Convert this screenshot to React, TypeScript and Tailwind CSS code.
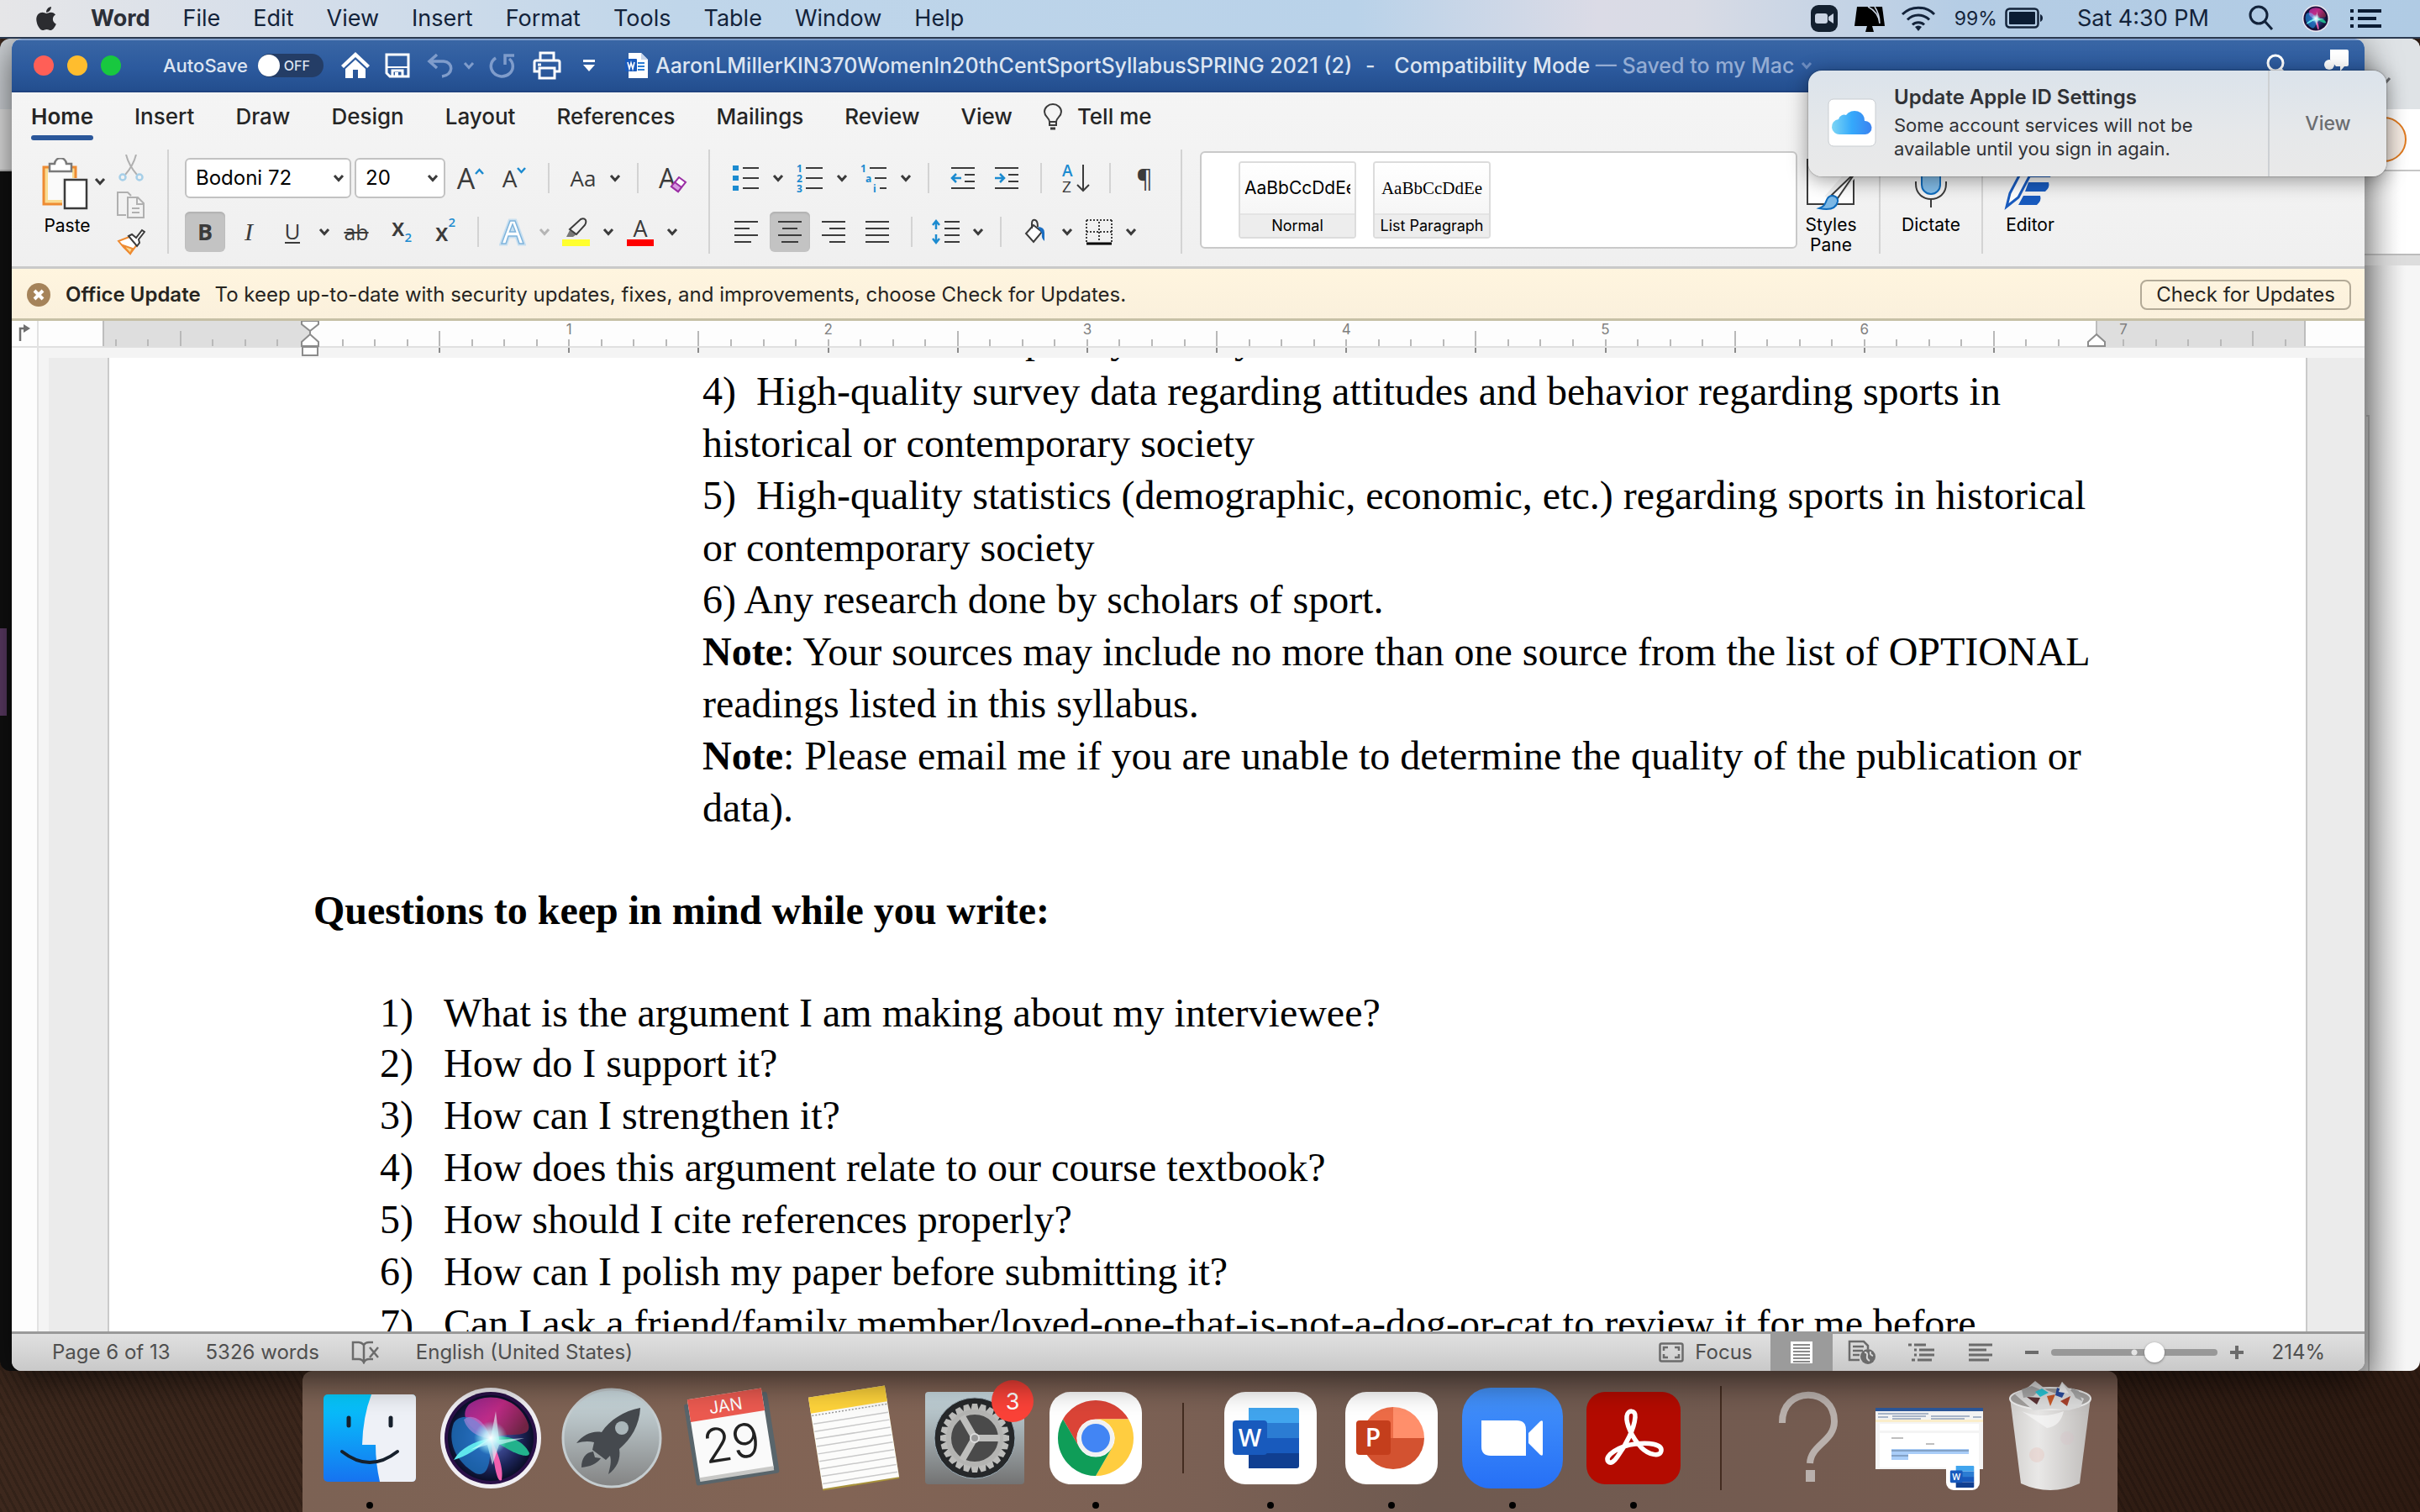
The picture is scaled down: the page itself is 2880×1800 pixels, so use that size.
import React from "react";
import { FaApple } from "react-icons/fa";

const ink = "#3b3b3b";
const blue = "#1c8bd0";

function Chevron({ color = ink }: { color?: string }) {
  return (
    <svg width="14" height="10" viewBox="0 0 14 10" fill="none" stroke={color} strokeWidth="3">
      <path d="M2 2l5 5.5L12 2" />
    </svg>
  );
}

function Cell({ label, active, children }: { label: string; active?: boolean; children: React.ReactNode }) {
  return (
    <button
      aria-label={label}
      className={
        active
          ? "mx-[2px] flex h-12 w-12 items-center justify-center rounded-md bg-[#c3c3c3] shadow-[inset_0_2px_2px_#b2b2b2]"
          : "flex h-12 w-[52px] items-center justify-center"
      }
    >
      {children}
    </button>
  );
}

function Drop({ label, muted }: { label: string; muted?: boolean }) {
  return (
    <button aria-label={label} className="flex h-12 w-6 items-center justify-center">
      <Chevron color={muted ? "#b5b5b5" : ink} />
    </button>
  );
}

const Sep = () => <div className="mx-[14px] h-9 w-[2px] bg-[#d3d3d3]" />;
const BigSep = () => <div className="mx-[17px] h-[124px] w-[2px] shrink-0 bg-[#d3d3d3]" />;

function Lines({ rows }: { rows: [number, number][] }) {
  return (
    <svg width="30" height="30" viewBox="0 0 30 30" stroke={ink} strokeWidth="2">
      {rows.map(([a, b], i) => (
        <path key={i} d={`M${a} ${3 + i * 8}H${b}`} />
      ))}
    </svg>
  );
}

function Field({ label, value, width }: { label: string; value: string; width: string }) {
  return (
    <div className={`relative ${width}`}>
      <select
        aria-label={label}
        defaultValue={value}
        className="h-12 w-full appearance-none rounded-md border-2 border-[#c2c2c2] bg-white pl-[11px] text-[24px] leading-[28px] text-black"
      >
        <option>{value}</option>
      </select>
      <span className="pointer-events-none absolute right-2 top-1/2 -translate-y-1/2">
        <Chevron />
      </span>
    </div>
  );
}

function MenuBar() {
  const menus = ["File", "Edit", "View", "Insert", "Format", "Tools", "Table", "Window", "Help"];
  return (
    <header className="relative z-10 flex h-[46px] shrink-0 items-center border-b-2 border-[#2b3a50] bg-[linear-gradient(90deg,#e6e6e8_0%,#d5deea_12%,#c0d6ea_28%,#b9d2e9_56%,#dbdbe6_66%,#d8dbe5_70%,#b5cde5_81%,#b0cbe4_100%)] pl-10 pr-[45px] text-[27px] leading-[32px] text-[#13233a]">
      <FaApple className="mr-[38px] h-[32px] w-[30px] text-[#2b2c30]" />
      <nav className="flex gap-[39px]">
        <button className="font-bold text-[#2b2f38]">Word</button>
        {menus.map((m) => (
          <button key={m}>{m}</button>
        ))}
      </nav>
      <div className="ml-auto flex items-center">
        <svg width="34" height="34" viewBox="0 0 34 34">
          <rect x="1" y="1" width="32" height="32" rx="9" fill="#13202f" />
          <rect x="6" y="11" width="15" height="12" rx="3" fill="#c9d3e2" />
          <path d="M22 15l6-4v12l-6-4z" fill="#c9d3e2" />
        </svg>
        <svg className="ml-[18px]" width="38" height="34" viewBox="0 0 38 34">
          <path d="M4 3h30l3 23H1z" fill="#000" />
          <path d="M16 26h6l2 7H14z" fill="#000" />
          <path d="M17 3c8 4 13 10 14 20M25 3c4 6 6 12 6 20" stroke="#c9d3e2" strokeWidth="1.500" fill="none" />
        </svg>
        <svg className="ml-[18px]" width="42" height="32" viewBox="0 0 42 32" fill="none" stroke="#13233a" strokeWidth="3">
          <path d="M2 11a27 27 0 0 1 38 0M8 17.500a18 18 0 0 1 26 0M14 23.500a10 10 0 0 1 14 0" />
          <path d="M17 26a6 6 0 0 1 8 0l-4 5z" fill="#13233a" stroke="none" />
        </svg>
        <span className="ml-[22px] text-[23px]">99%</span>
        <svg className="ml-[9px]" width="46" height="26" viewBox="0 0 46 26">
          <rect x="1.500" y="1.500" width="38" height="22" rx="4" fill="none" stroke="#13233a" strokeWidth="2.500" />
          <rect x="5" y="5" width="31" height="15" rx="1" fill="#0b1c33" />
          <path d="M42 8c4 1 4 8 0 9z" fill="#13233a" />
        </svg>
        <span className="ml-[40px]">Sat 4:30 PM</span>
        <svg className="ml-[46px]" width="32" height="32" viewBox="0 0 32 32" fill="none" stroke="#13233a" strokeWidth="3">
          <circle cx="13" cy="12" r="10" />
          <path d="M20 19l9 10" />
        </svg>
        <svg className="ml-[32px]" width="34" height="34" viewBox="0 0 128 128">
          <SiriArt />
        </svg>
        <svg className="ml-[24px]" width="38" height="26" viewBox="0 0 38 26" fill="#0b1c33">
          <path d="M0 2h4v4H0zM9 2h28v4H9zM0 11h4v4H0zM9 11h22v4H9zM0 20h4v4H0zM9 20h28v4H9z" />
        </svg>
      </div>
    </header>
  );
}

function TitleBar() {
  return (
    <div className="flex h-16 shrink-0 items-center border-b-2 border-[#1f4380] border-t-2 border-t-[#7f9dca] bg-[linear-gradient(#3966a5,#2c5a9e_55%,#234e8e)] pl-[26px] pr-[18px] text-[25px] font-medium leading-[30px] text-[#dde5f1]">
      <div className="flex gap-4">
        <button aria-label="Close" className="h-6 w-6 rounded-full bg-[#ff5f57]" />
        <button aria-label="Minimize" className="h-6 w-6 rounded-full bg-[#ffbd2e]" />
        <button aria-label="Zoom window" className="h-6 w-6 rounded-full bg-[#18c83f]" />
      </div>
      <label className="ml-[50px] flex items-center gap-3">
        <span className="text-[22px]">AutoSave</span>
        <span className="relative flex h-7 w-[78px] items-center justify-end rounded-full bg-[#243d66] pr-4 text-[16px]">
          <input type="checkbox" className="absolute left-0 top-[1px] h-[26px] w-[26px] appearance-none rounded-full bg-white" />
          OFF
        </span>
      </label>
      <div className="ml-[21px] flex items-center">
        <button aria-label="Home">
          <svg width="34" height="32" viewBox="0 0 34 32" fill="#fff">
            <path d="M17 0L0 16l3 3L17 6l14 13 3-3z" />
            <path d="M17 9L5 20v11h9V21h6v10h9V20z" />
          </svg>
        </button>
        <button aria-label="Save" className="ml-[18px]">
          <svg width="30" height="30" viewBox="0 0 30 30" fill="none" stroke="#fff" strokeWidth="3">
            <path d="M2 2h26v26H6l-4-4z" />
            <path d="M3 17h24" strokeWidth="2" />
            <path d="M9 28v-7h12v7" />
            <path d="M14 23v6" strokeWidth="4" />
          </svg>
        </button>
        <button aria-label="Undo" className="ml-[20px]">
          <svg width="34" height="30" viewBox="0 0 34 30" fill="none" stroke="#7f9ccb" strokeWidth="3.500">
            <path d="M12 2L3 10l9 8M4 10h16c12 1 12 16-2 18" />
          </svg>
        </button>
        <button aria-label="Undo history" className="ml-[9px]">
          <Chevron color="#7f9ccb" />
        </button>
        <button aria-label="Repeat" className="ml-[17px]">
          <svg width="32" height="32" viewBox="0 0 32 32" fill="none" stroke="#7f9ccb" strokeWidth="3.500">
            <path d="M8 7a13 12 0 1 0 16 1M19 15V4h11" />
          </svg>
        </button>
        <button aria-label="Print" className="ml-[20px]">
          <svg width="34" height="34" viewBox="0 0 34 34" fill="none" stroke="#fff" strokeWidth="3">
            <path d="M9 11V2h16v9M8 24H2V13q0-2 2-2h26q2 0 2 2v11h-6M8 20h18v12H8z" />
            <path d="M6 16h4" />
          </svg>
        </button>
        <button aria-label="Customize toolbar" className="ml-[24px]">
          <svg width="18" height="18" viewBox="0 0 18 18" fill="#fff">
            <path d="M2 2h14v3H2zM2 8h14l-7 8z" />
          </svg>
        </button>
      </div>
      <svg className="ml-[34px]" width="28" height="30" viewBox="0 0 28 30">
        <path d="M4 0h15l8 8v22H4z" fill="#fff" />
        <path d="M19 0v8h8z" fill="#c6d4ea" />
        <path d="M15 12h8M15 16h8M15 20h8" stroke="#2b7cd3" strokeWidth="2" />
        <rect x="0" y="7" width="14" height="15" rx="1" fill="#185abd" />
        <path d="M3 11l2 8 2-7 2 7 2-8" fill="none" stroke="#fff" strokeWidth="1.600" />
      </svg>
      <div className="ml-[8px] whitespace-pre">
        AaronLMillerKIN370WomenIn20thCentSportSyllabusSPRING 2021 (2)<span className="mx-4">-</span> Compatibility Mode
        <span className="text-[#94acd3]"> — Saved to my Mac</span>
      </div>
      <button aria-label="File location" className="ml-[8px]">
        <Chevron color="#6c8cc0" />
      </button>
      <button aria-label="Search" className="ml-auto">
        <svg width="28" height="28" viewBox="0 0 28 28" fill="none" stroke="#fff" strokeWidth="3">
          <circle cx="12" cy="11" r="9" />
          <path d="M18 18l8 8" />
        </svg>
      </button>
      <button aria-label="Share" className="ml-[42px]">
        <svg width="30" height="42" viewBox="0 0 30 42" fill="#fff">
          <path d="M7 2h20q2 0 2 2v16q0 2-2 2h-3l-5 6v-6h-5L7 14z" />
          <circle cx="6" cy="20" r="6" />
          <path d="M0 40c0-14 12-14 12 0z" />
        </svg>
      </button>
    </div>
  );
}

function Tabs() {
  const tabs = ["Insert", "Draw", "Design", "Layout", "References", "Mailings", "Review", "View"];
  return (
    <div className="flex h-[58px] shrink-0 items-center gap-[49px] pl-[23px] text-[26px] font-medium leading-[30px] text-[#252525]">
      <button className="relative font-semibold">
        Home
        <span className="absolute -bottom-[13px] left-0 h-[6px] w-full rounded-full bg-[#2b579a]" />
      </button>
      {tabs.map((t) => (
        <button key={t}>{t}</button>
      ))}
      <button className="-ml-3 flex items-center gap-[18px]">
        <svg width="22" height="32" viewBox="0 0 22 32" fill="none" stroke={ink} strokeWidth="2">
          <path d="M7 22c0-5-6-6-6-12a10 9 0 0 1 20 0c0 6-6 7-6 12zM7 22v4h8v-4" />
          <path d="M8 30h6" strokeWidth="3" />
        </svg>
        Tell me
      </button>
    </div>
  );
}

function BigTool({ label, width, children }: { label: string; width: string; children: React.ReactNode }) {
  return (
    <button className={`flex shrink-0 flex-col items-center gap-[6px] pt-[10px] text-[21px] leading-[24px] text-black ${width}`}>
      {children}
      <span>{label}</span>
    </button>
  );
}

function Ribbon() {
  const letter = "font-['Open_Sans'] text-[#3b3b3b]";
  return (
    <div className="flex h-[152px] shrink-0 items-start border-b-[3px] border-[#c9c9c9] pl-[26px] pr-[359px] pt-[10px]">
      <div className="flex w-[142px] shrink-0 justify-between pr-[9px]">
        <div className="flex pt-[10px]">
          <button className="flex w-[80px] flex-col items-center gap-[7px] text-[21px] leading-[24px] text-black">
            <svg className="mr-1" width="64" height="62" viewBox="0 0 64 62">
              <path d="M6 11h38v44H6z" fill="#fadb90" stroke="#ee8b32" strokeWidth="3" />
              <path d="M11 14h29v36H11z" fill="#fafafa" />
              <path d="M13 7h6c1-9 13-9 14 0h6v9H13z" fill="#fff" stroke="#7a7a7a" strokeWidth="2.500" />
              <path d="M28 24h32v38H28z" fill="#f3f3f3" />
              <path d="M31 26h26v34H31z" fill="#fff" stroke={ink} strokeWidth="2.500" />
            </svg>
            Paste
          </button>
          <button aria-label="Paste options" className="-ml-2 mt-[18px] flex h-5 w-4 items-center">
            <Chevron />
          </button>
        </div>
        <div className="flex flex-col items-center gap-[12px] pt-[6px]">
          <button aria-label="Cut">
            <svg width="34" height="32" viewBox="0 0 34 32" fill="none" strokeWidth="2">
              <path d="M11 0c2 8 6 16 13 24M23 0c-2 8-6 16-13 24" stroke="#b0b0b0" />
              <circle cx="7" cy="27" r="3.500" stroke="#a6cfe8" strokeWidth="2.500" />
              <circle cx="27" cy="27" r="3.500" stroke="#a6cfe8" strokeWidth="2.500" />
            </svg>
          </button>
          <button aria-label="Copy">
            <svg width="34" height="32" viewBox="0 0 34 32" fill="none" stroke="#b0b0b0" strokeWidth="2">
              <path d="M11 28H1V1h12l4 4M13 7h12l7 7v17H13zM24 7v8h8M18 20h9M18 25h9" />
            </svg>
          </button>
          <button aria-label="Format painter">
            <svg width="34" height="32" viewBox="0 0 34 32" strokeWidth="2">
              <path d="M15 10L2 15q6 8 14 15l8-11z" fill="#fff" stroke="#ee8b32" />
              <path d="M7 20l12 4-3 6z" fill="#fadb90" stroke="#ee8b32" />
              <path d="M14 9l4-2 5 4 7-9 3 2-7 9 1 4-3 4z" fill="#fff" stroke={ink} />
            </svg>
          </button>
        </div>
      </div>
      <BigSep />
      <div className="flex shrink-0 flex-col gap-4 pt-[10px]">
        <div className="flex items-center">
          <div className="ml-[2px] mr-1 flex gap-1">
            <Field label="Font" value="Bodoni 72" width="w-[198px]" />
            <Field label="Font size" value="20" width="w-[108px]" />
          </div>
          <Cell label="Grow font">
            <span className={`${letter} flex text-[34px] leading-[40px]`}>
              A
              <svg className="mt-2" width="11" height="8" viewBox="0 0 11 8" fill="none" stroke={blue} strokeWidth="2.500">
                <path d="M1 7l4.500-5L10 7" />
              </svg>
            </span>
          </Cell>
          <Cell label="Shrink font">
            <span className={`${letter} flex text-[28px] leading-[34px]`}>
              A
              <svg className="mt-1" width="11" height="8" viewBox="0 0 11 8" fill="none" stroke={blue} strokeWidth="2.500">
                <path d="M1 1l4.500 5L10 1" />
              </svg>
            </span>
          </Cell>
          <Sep />
          <Cell label="Change case">
            <span className={`${letter} text-[26px] leading-[34px]`}>Aa</span>
          </Cell>
          <Drop label="Case options" />
          <Sep />
          <Cell label="Clear formatting">
            <span className={`${letter} relative w-8 text-left text-[32px] leading-[40px]`}>
              A
              <svg className="absolute left-3 top-[18px]" width="22" height="20" viewBox="0 0 22 20" strokeWidth="2" stroke="#9b2fa5">
                <path d="M12 1l8 6-9 11-8-6z" fill="#fff" />
                <path d="M7 7l8 6-4 5-8-6z" fill="#d79be0" />
              </svg>
            </span>
          </Cell>
        </div>
        <div className="flex items-center">
          <Cell label="Bold" active>
            <span className={`${letter} text-[27px] font-bold leading-[34px]`}>B</span>
          </Cell>
          <Cell label="Italic">
            <span className="font-['Liberation_Serif'] text-[30px] italic leading-[34px] text-[#3b3b3b]">I</span>
          </Cell>
          <Cell label="Underline">
            <span className={`${letter} border-b-2 border-[#3b3b3b] text-[26px] leading-[26px]`}>U</span>
          </Cell>
          <Drop label="Underline options" />
          <Cell label="Strikethrough">
            <span className={`${letter} text-[25px] leading-[34px] line-through`}>ab</span>
          </Cell>
          <Cell label="Subscript">
            <span className={`${letter} ml-1 flex text-[28px] font-semibold leading-[34px]`}>
              x<span className="mt-3 text-[15px] text-[#1c8bd0]">2</span>
            </span>
          </Cell>
          <Cell label="Superscript">
            <span className={`${letter} ml-1 flex text-[28px] font-semibold leading-[34px]`}>
              x<span className="-mt-3 text-[15px] text-[#1c8bd0]">2</span>
            </span>
          </Cell>
          <Sep />
          <Cell label="Text effects">
            <svg width="32" height="34" viewBox="0 0 32 34">
              <path d="M3 31L13 4h6l10 27h-5l-3-9H11l-3 9zM12.500 17h7L16 8z" fill="#fff" stroke="#c8dff0" strokeWidth="5" />
              <path d="M3 31L13 4h6l10 27h-5l-3-9H11l-3 9zM12.500 17h7L16 8z" fill="#fff" stroke="#7fb4dc" strokeWidth="1.500" />
            </svg>
          </Cell>
          <Drop label="Effect options" muted />
          <Cell label="Highlight">
            <svg width="34" height="34" viewBox="0 0 34 34">
              <path d="M5 23l4-8 8 5-4 3z" fill="#777" />
              <path d="M9 14L22 2q4-2 6 1 1 3-1 6l-10 11z" fill="none" stroke={ink} strokeWidth="2" />
              <path d="M0 26h33v8H0z" fill="#ffff2e" />
            </svg>
          </Cell>
          <Drop label="Highlight colors" />
          <Cell label="Font color">
            <span className={`${letter} w-8 border-b-8 border-[#fe0000] text-center text-[27px] leading-[26px]`}>A</span>
          </Cell>
          <Drop label="Font colors" />
        </div>
      </div>
      <BigSep />
      <div className="flex shrink-0 flex-col gap-4 pt-[10px]">
        <div className="flex items-center">
          <Cell label="Bullets">
            <svg width="32" height="32" viewBox="0 0 32 32">
              <path d="M0 1h7v6H0zM0 13h7v6H0zM0 25h7v6H0z" fill={blue} />
              <path d="M12 4h19M12 16h19M12 28h19" stroke={ink} strokeWidth="2" />
            </svg>
          </Cell>
          <Drop label="Bullet styles" />
          <Cell label="Numbering">
            <svg width="32" height="46" viewBox="0 -7 32 46">
              <g fill={blue} fontFamily="Open Sans" fontSize="12" fontWeight="700">
                <text x="0" y="9">1</text>
                <text x="0" y="21">2</text>
                <text x="0" y="33">3</text>
              </g>
              <path d="M11 4h20M11 16h20M11 28h20" stroke={ink} strokeWidth="2" />
            </svg>
          </Cell>
          <Drop label="Number styles" />
          <Cell label="Multilevel list">
            <svg width="32" height="46" viewBox="0 -7 32 46">
              <g fill={blue} fontFamily="Open Sans" fontSize="12" fontWeight="700">
                <text x="0" y="9">1</text>
                <text x="6" y="21">a</text>
                <text x="15" y="33">i</text>
              </g>
              <path d="M11 4h20M17 16h14M23 28h8" stroke={ink} strokeWidth="2" />
            </svg>
          </Cell>
          <Drop label="Multilevel styles" />
          <Sep />
          <Cell label="Decrease indent">
            <svg width="30" height="28" viewBox="0 0 30 28" fill="none" strokeWidth="2">
              <path d="M1 2h28M17 10h12M17 18h12M1 26h28" stroke={ink} />
              <path d="M13 14H2M7 9l-5 5 5 5" stroke={blue} strokeWidth="2.500" />
            </svg>
          </Cell>
          <Cell label="Increase indent">
            <svg width="30" height="28" viewBox="0 0 30 28" fill="none" strokeWidth="2">
              <path d="M1 2h28M17 10h12M17 18h12M1 26h28" stroke={ink} />
              <path d="M1 14h11M7 9l5 5-5 5" stroke={blue} strokeWidth="2.500" />
            </svg>
          </Cell>
          <Sep />
          <Cell label="Sort">
            <svg width="34" height="46" viewBox="0 -6 34 46">
              <g fontFamily="Open Sans" fontSize="19">
                <text x="1" y="15" fill={blue} fontWeight="600">A</text>
                <text x="1" y="34" fill={ink}>Z</text>
              </g>
              <path d="M26 1v31M19 25l7 7 7-7" fill="none" stroke={ink} strokeWidth="2" />
            </svg>
          </Cell>
          <Sep />
          <Cell label="Show marks">
            <span className={`${letter} text-[30px] leading-[34px]`}>¶</span>
          </Cell>
        </div>
        <div className="flex items-center">
          <Cell label="Align left">
            <Lines rows={[[1, 29], [1, 19], [1, 29], [1, 21]]} />
          </Cell>
          <Cell label="Center" active>
            <Lines rows={[[1, 29], [6, 24], [1, 29], [5, 25]]} />
          </Cell>
          <Cell label="Align right">
            <Lines rows={[[1, 29], [10, 29], [1, 29], [10, 29]]} />
          </Cell>
          <Cell label="Justify">
            <Lines rows={[[1, 29], [1, 29], [1, 29], [1, 29]]} />
          </Cell>
          <Sep />
          <Cell label="Line spacing">
            <svg width="34" height="30" viewBox="0 0 34 30" fill="none" strokeWidth="2">
              <path d="M15 3h18M15 11h18M15 19h18M15 27h18" stroke={ink} />
              <path d="M5 12V3M1 7l4-5 4 5M5 18v9M1 23l4 5 4-5" stroke={blue} strokeWidth="2.500" />
            </svg>
          </Cell>
          <Drop label="Spacing options" />
          <Sep />
          <Cell label="Shading">
            <svg width="28" height="32" viewBox="0 0 28 32">
              <path d="M12 8L3 18l9 10 10-12z" fill="#fff" stroke={ink} strokeWidth="2" />
              <path d="M10 12V6q0-5 4-4 3 1 3 8" fill="none" stroke={ink} strokeWidth="2" />
              <path d="M17 10q8 0 8 7v10q-4-3-3-9z" fill="#1b6ec2" />
            </svg>
          </Cell>
          <Drop label="Shading colors" />
          <Cell label="Borders">
            <svg width="32" height="32" viewBox="0 0 32 32" fill="none" stroke={ink} strokeWidth="2">
              <path d="M1 2h30M1 2v26M31 2v26M16 4v24M1 16h30" strokeDasharray="2 2" />
              <path d="M1 30h30" stroke="#000" strokeWidth="3" />
            </svg>
          </Cell>
          <Drop label="Border options" />
        </div>
      </div>
      <BigSep />
      <div className="ml-1 mt-[2px] flex h-[116px] min-w-0 flex-1 gap-5 rounded-md border-2 border-[#c9c9c9] bg-white py-[10px] pl-11">
        <StyleCard name="Normal" font="text-[21px]" />
        <StyleCard name="List Paragraph" font="font-['Liberation_Serif'] text-[21px]" />
      </div>
      <BigTool label="Styles Pane" width="w-[80px]">
        <svg width="60" height="62" viewBox="0 0 60 62">
          <path d="M2 2h55v53H2z" fill="#fff" stroke={ink} strokeWidth="2" />
          <path d="M58 20L34 50l-7-5L52 16z" fill="#fff" stroke="#f0f0f0" strokeWidth="6" />
          <path d="M60 16L38 48l-7-4z" fill="#fff" stroke={ink} strokeWidth="2" />
          <path d="M16 60c10 2 20 1 22-8 1-6-8-10-12-4-3 5-2 9-10 12z" fill="#7cb8e6" stroke="#0f6cbd" strokeWidth="2" />
        </svg>
      </BigTool>
      <BigSep />
      <BigTool label="Dictate" width="w-[86px]">
        <svg width="40" height="62" viewBox="0 0 40 62" fill="none">
          <rect x="9" y="4" width="22" height="39" rx="11" fill="#83bde8" stroke="#0f6cbd" strokeWidth="2" />
          <path d="M2 28v3c0 24 36 24 36 0v-3M20 49v10" stroke={ink} strokeWidth="2" />
        </svg>
      </BigTool>
      <BigSep />
      <BigTool label="Editor" width="w-[78px]">
        <svg width="64" height="62" viewBox="0 0 64 62">
          <path d="M36 12h24l-4 11H30zM30 29h24q2 6-4 11H26zM24 45h20q2 6-4 11H18z" fill="#185abd" />
          <path d="M4 58l4-16L28 4l10 5-20 38z" fill="#fff" stroke="#185abd" strokeWidth="3" />
        </svg>
      </BigTool>
    </div>
  );
}

function StyleCard({ name, font }: { name: string; font: string }) {
  return (
    <button className="flex w-[140px] shrink-0 flex-col overflow-hidden rounded border-2 border-[#dcdcdc] bg-white text-black">
      <span className={`flex h-[60px] w-full items-center overflow-hidden whitespace-nowrap bg-[linear-gradient(#fff,#f6f6f6)] px-[5px] ${font}`}>
        <span className="mx-auto block overflow-hidden leading-[26px]">AaBbCcDdEe</span>
      </span>
      <span className="flex w-full flex-1 items-center justify-center border-t-2 border-[#e4e4e4] bg-[#ededed] text-[18px] leading-[22px]">
        {name}
      </span>
    </button>
  );
}

function UpdateBar() {
  return (
    <div className="flex h-[62px] shrink-0 items-center border-b-[3px] border-[#c6c0a6] bg-[linear-gradient(#fff5df,#faf0dc)] pl-[18px] pr-4 pt-[2px] text-[24px] leading-[28px] text-[#26241f]">
      <button aria-label="Dismiss">
        <svg width="28" height="28" viewBox="0 0 28 28">
          <circle cx="14" cy="14" r="14" fill="#a5835a" />
          <path d="M9 9l10 10M19 9L9 19" stroke="#fff" strokeWidth="4" />
        </svg>
      </button>
      <strong className="ml-[18px] font-semibold">Office Update</strong>
      <span className="ml-[17px]">
        To keep up-to-date with security updates, fixes, and improvements, choose Check for Updates.
      </span>
      <button className="ml-auto h-9 rounded-lg border-2 border-[#b3aa97] px-[17px]">Check for Updates</button>
    </div>
  );
}

function Ruler() {
  const inch = 308.3;
  const zero = 355;
  const ticks: React.ReactNode[] = [];
  for (let i = -6; i <= 61; i++) {
    if (i === 0) continue;
    const x = Math.round(zero + (i * inch) / 8);
    if (x > 2728) break;
    const half = ((i % 8) + 8) % 8 === 4;
    if (i !== 55) ticks.push(<path key={i} d={`M${x} ${half ? 12 : 22}V30`} />);
    if (i > 0 && i % 4 === 0 && i < 54) ticks.push(<path key={`b${i}`} d={`M${x} 32V38`} stroke="#8b8b8b" />);
  }
  return (
    <div className="h-[44px] shrink-0 overflow-hidden">
      <svg width="2800" height="44" viewBox="0 0 2800 44">
        <rect width="2800" height="44" fill="#f4f4f4" />
        <rect width="2800" height="30" fill="#fdfdfd" />
        <rect y="30" width="2800" height="2" fill="#e0e0e0" />
        <rect x="30" width="2" height="44" fill="#e2e2e2" />
        <rect y="32" width="30" height="12" fill="#fdfdfd" />
        <rect x="108" width="247" height="31" fill="#dedede" />
        <rect x="2481" width="249" height="31" fill="#dedede" />
        <path d="M109 0v30M2481 0v30M2729 0v30" stroke="#bdbdbd" strokeWidth="2" />
        <g stroke="#b9b9b9" strokeWidth="2">{ticks}</g>
        <g fontFamily="Inter" fontSize="17" fill="#808080" textAnchor="middle">
          {[1, 2, 3, 4, 5, 6, 7].map((n) => (
            <text key={n} x={zero + n * inch} y="16">{n}</text>
          ))}
        </g>
        <g fill="#fff" stroke="#8c8c8c" strokeWidth="2">
          <path d="M345 0h20v4l-10 8-10-8zM355 12v5" />
          <path d="M355 16l10 9v5h-20v-5zM346 31h18v10h-18z" />
          <path d="M2481 16l10 9v5h-20v-5z" />
        </g>
        <path d="M10 24V9h8" fill="none" stroke="#6f6f6f" strokeWidth="2.500" />
        <path d="M14 4l8 5-8 5z" fill="#6f6f6f" />
      </svg>
    </div>
  );
}

function Document() {
  const questions = [
    "What is the argument I am making about my interviewee?",
    "How do I support it?",
    "How can I strengthen it?",
    "How does this argument relate to our course textbook?",
    "How should I cite references properly?",
    "How can I polish my paper before submitting it?",
    "Can I ask a friend/family member/loved-one-that-is-not-a-dog-or-cat to review it for me before",
  ];
  return (
    <div className="flex min-h-0 flex-1 overflow-hidden bg-[#ebebeb]">
      <div className="w-8 shrink-0 border-r-2 border-[#e2e2e2] bg-[#fdfdfd]" />
      <div className="w-3 shrink-0 bg-[#f4f4f4]" />
      <main className="ml-[70px] mr-[68px] min-w-0 flex-1 border-x-2 border-[#cacaca] bg-white font-['Liberation_Serif'] text-[48px] leading-[62px] text-black">
        <div className="-mt-[53px] whitespace-nowrap pl-[706px]">
          <p>historical or contemporary society</p>
          <p>
            4)&nbsp; High-quality survey data regarding attitudes and behavior regarding sports in
            <br />
            historical or contemporary society
          </p>
          <p>
            5)&nbsp; High-quality statistics (demographic, economic, etc.) regarding sports in historical
            <br />
            or contemporary society
          </p>
          <p>6) Any research done by scholars of sport.</p>
          <p>
            <b>Note</b>: Your sources may include no more than one source from the list of OPTIONAL
            <br />
            readings listed in this syllabus.
          </p>
          <p>
            <b>Note</b>: Please email me if you are unable to determine the quality of the publication or
            <br />
            data).
          </p>
        </div>
        <h2 className="mb-[60px] mt-[60px] pl-[243px] font-bold">Questions to keep in mind while you write:</h2>
        <ol className="whitespace-nowrap pl-[322px]">
          {questions.map((q, i) => (
            <li key={q} className="flex first:-mb-[2px]">
              <span className="w-[76px]">{i + 1})</span>
              {q}
            </li>
          ))}
        </ol>
      </main>
    </div>
  );
}

function StatusBar() {
  const g = "#6b6b6b";
  return (
    <footer className="flex h-[47px] shrink-0 items-center border-t-[3px] border-[#9a9a9a] bg-[linear-gradient(#e0e0e0,#c9c9c9)] pl-[48px] pr-[47px] text-[24px] leading-[28px] text-[#4f4f4f]">
      <button>Page 6 of 13</button>
      <button className="ml-[42px]">5326 words</button>
      <button aria-label="Proofing" className="ml-[38px]">
        <svg width="34" height="28" viewBox="0 0 34 28" fill="none" stroke={g} strokeWidth="2.500">
          <path d="M15 5q-3-3-6-3H2v20h7q4 0 6 4 2-4 6-4h5M15 5v20M15 5q2-3 6-3h5" />
          <path d="M22 8l10 12M32 8L22 20" />
        </svg>
      </button>
      <button className="ml-[43px]">English (United States)</button>
      <button className="ml-auto flex items-center gap-[13px]">
        <svg width="30" height="24" viewBox="0 0 30 24" fill="none" stroke={g} strokeWidth="2.500">
          <rect x="1.500" y="1.500" width="27" height="21" rx="2" />
          <path d="M6 10V6h5M19 6h5v4M24 14v4h-5M11 18H6v-4" />
        </svg>
        Focus
      </button>
      <button aria-label="Print layout" className="ml-[21px] flex h-11 w-[74px] items-center justify-center bg-[#9b9b9b]">
        <svg width="28" height="28" viewBox="0 0 28 28">
          <path d="M1 1h26v26H1z" fill="#fff" />
          <path d="M4 5h20M4 9h20M4 13h20M4 17h20M4 21h20M4 25h20" stroke="#8a8a8a" strokeWidth="2" />
        </svg>
      </button>
      <button aria-label="Web layout" className="ml-[18px]">
        <svg width="34" height="30" viewBox="0 0 34 30" fill="none" stroke={g} strokeWidth="2.500">
          <path d="M14 24H2V2h17l5 5v4M6 8h13M6 13h12M6 18h8" />
          <circle cx="24" cy="20" r="9" fill={g} stroke="none" />
          <path d="M20 15q4 0 3 4t3 6M27 14q-1 4 3 5" stroke="#d6d6d6" strokeWidth="2" />
        </svg>
      </button>
      <button aria-label="Outline" className="ml-[38px]">
        <svg width="32" height="24" viewBox="0 0 32 24" stroke={g} strokeWidth="3">
          <path d="M0 3h4M7 3h14M7 9h3M13 9h18M7 15h3M13 15h18M4 21h4M11 21h17" />
        </svg>
      </button>
      <button aria-label="Draft" className="ml-[40px]">
        <svg width="28" height="24" viewBox="0 0 28 24" stroke={g} strokeWidth="3">
          <path d="M0 3h28M0 9h21M0 15h28M0 21h24" />
        </svg>
      </button>
      <button aria-label="Zoom out" className="ml-[38px]">
        <svg width="18" height="18" viewBox="0 0 18 18" stroke={g} strokeWidth="4">
          <path d="M1 9h16" />
        </svg>
      </button>
      <input
        type="range"
        aria-label="Zoom"
        min={0}
        max={100}
        defaultValue={64}
        className="ml-[14px] h-2 w-[198px] appearance-none rounded-full bg-[radial-gradient(circle_at_50%_50%,#e4e4e4_3px,#989898_4px)] [&::-webkit-slider-thumb]:h-6 [&::-webkit-slider-thumb]:w-6 [&::-webkit-slider-thumb]:appearance-none [&::-webkit-slider-thumb]:rounded-full [&::-webkit-slider-thumb]:bg-white [&::-webkit-slider-thumb]:shadow-[0_1px_3px_#777]"
      />
      <button aria-label="Zoom in" className="ml-[14px]">
        <svg width="18" height="18" viewBox="0 0 18 18" stroke={g} strokeWidth="4">
          <path d="M1 9h16M9 1v16" />
        </svg>
      </button>
      <button className="ml-[33px]">214%</button>
    </footer>
  );
}

function SiriArt() {
  return (
    <>
      <defs>
        <radialGradient id="siriBase" cx=".5" cy=".5" r=".5">
          <stop offset="0" stopColor="#5a6cc8" />
          <stop offset=".7" stopColor="#1c2458" />
          <stop offset="1" stopColor="#0a0e28" />
        </radialGradient>
        <radialGradient id="siriGlow">
          <stop offset="0" stopColor="#fff" />
          <stop offset=".4" stopColor="#c8fbff" stopOpacity=".8" />
          <stop offset="1" stopColor="#8ff" stopOpacity="0" />
        </radialGradient>
        <linearGradient id="siriPink" x2="1" y2=".6">
          <stop offset="0" stopColor="#a02a9c" />
          <stop offset=".5" stopColor="#cf2b8a" />
          <stop offset="1" stopColor="#7a2444" />
        </linearGradient>
      </defs>
      <circle cx="64" cy="64" r="60" fill="#f0eef2" />
      <circle cx="64" cy="64" r="55" fill="#2a1048" />
      <circle cx="64" cy="64" r="51" fill="url(#siriBase)" />
      <path d="M64 64C38 54 26 38 38 24c24-18 62-6 71 24 4 18-25 8-45 16z" fill="url(#siriPink)" opacity=".9" />
      <path d="M64 64C48 36 28 34 20 46c-8 22 2 46 26 60 16 6 18-16 18-42z" fill="#1f78c8" opacity=".75" />
      <path d="M64 64C56 40 40 34 32 42c4 14 18 22 32 22z" fill="#b48be0" opacity=".6" />
      <path d="M64 64c20-6 40 4 46 18 0 6-16 4-46-18z" fill="#22b28c" />
      <path d="M64 64c8 16 16 36 13 50-6 4-9-20-13-50z" fill="#f25fae" />
      <path d="M64 64C50 76 34 86 20 90c8-14 24-22 44-26z" fill="#5fe6ec" />
      <path d="M64 64l6-32 4 34 30-2-30 8-8 24-6-24-20 6z" fill="#e9ffff" opacity=".6" />
      <circle cx="64" cy="64" r="20" fill="url(#siriGlow)" />
    </>
  );
}

function WordArt() {
  return (
    <>
      <path d="M38 28h57q3 0 3 3v15H38z" fill="#41a5ee" />
      <path d="M38 46h60v18H38z" fill="#2b7cd3" />
      <path d="M38 64h60v18H38z" fill="#185abd" />
      <path d="M38 82h60v15q0 3-3 3H38z" fill="#103f91" />
      <rect x="19" y="43" width="41" height="41" rx="4" fill="#185abd" />
      <text x="39.500" y="74" textAnchor="middle" fontFamily="Open Sans" fontWeight="600" fontSize="29" fill="#fff">W</text>
    </>
  );
}

function Tile({ children }: { children?: React.ReactNode }) {
  return (
    <>
      <rect x="9" y="10" width="110" height="110" rx="25" fill="#8a7468" opacity=".5" />
      <rect x="9" y="9" width="110" height="110" rx="25" fill="#fff" />
      {children}
    </>
  );
}

function Gear() {
  const teeth = Array.from({ length: 24 }, (_, i) => i * 15);
  return (
    <>
      <defs>
        <linearGradient id="prefs" x2="0" y2="1">
          <stop offset="0" stopColor="#c9dbe2" />
          <stop offset="1" stopColor="#737373" />
        </linearGradient>
      </defs>
      <rect x="5" y="9" width="118" height="110" rx="4" fill="url(#prefs)" />
      <circle cx="64" cy="64" r="48" fill="#26282a" stroke="#9fb0ba" strokeWidth="1" />
      {teeth.map((t) => (
        <path key={t} d="M61 23h6l2 9H59z" fill="#bdbdbb" transform={`rotate(${t} 64 64)`} />
      ))}
      <circle cx="64" cy="64" r="31" fill="#4a4a4a" stroke="#b4b4b2" strokeWidth="6" />
      <path d="M64 64h30M64 64L49 38M64 64L49 90" stroke="#bebebc" strokeWidth="8" />
      <circle cx="64" cy="64" r="5" fill="#9a9a9a" stroke="#dcdcdc" strokeWidth="2" />
      <circle cx="109" cy="20" r="25" fill="#fb4238" />
      <text x="109" y="30" textAnchor="middle" fontFamily="Inter" fontSize="27" fill="#fff">3</text>
    </>
  );
}

const chromePart = "M25 41.500A45 45 0 0 1 103 41.500H64A22.500 22.500 0 0 0 44.500 75.250Z";

const apps: { name: string; running?: boolean; art: React.ReactNode }[] = [
  {
    name: "Finder",
    running: true,
    art: (
      <>
        <defs>
          <linearGradient id="finder" x2="0" y2="1">
            <stop offset="0" stopColor="#05cdfd" />
            <stop offset="1" stopColor="#1673f0" />
          </linearGradient>
        </defs>
        <rect x="9" y="12" width="110" height="104" rx="5" fill="url(#finder)" />
        <path d="M66 12h48q5 0 5 5v94q0 5-5 5H76q-5-22-5-44H55q1-34 11-60z" fill="#eef1f7" />
        <path d="M39 40v9M89 40v9" stroke="#16202c" strokeWidth="5" strokeLinecap="round" />
        <path d="M31 80q33 26 66 0" fill="none" stroke="#16202c" strokeWidth="4" strokeLinecap="round" />
      </>
    ),
  },
  { name: "Siri", art: <SiriArt /> },
  {
    name: "Launchpad",
    art: (
      <>
        <defs>
          <linearGradient id="launch" x2="0" y2="1">
            <stop offset="0" stopColor="#cfdfe4" />
            <stop offset="1" stopColor="#838383" />
          </linearGradient>
        </defs>
        <circle cx="64" cy="64" r="58" fill="url(#launch)" stroke="#c5cdd0" strokeWidth="3" />
        <path d="M98 28C78 32 62 42 52 57c-11-2-22 3-30 13 7-2 14-3 21-1l-2 9 16 12 5-5c2 7 0 14-2 22 10-7 15-18 13-30 14-12 24-28 25-49z" fill="#45494e" />
        <circle cx="76" cy="52" r="8" fill="#aab6ba" />
        <path d="M42 80c-9 1-14 8-14 19 10-1 18-4 23-11l-7-1z" fill="#45494e" />
      </>
    ),
  },
  {
    name: "Calendar",
    art: (
      <g transform="rotate(-9 60 60)">
        <rect x="12" y="16" width="100" height="98" rx="3" fill="#59656b" />
        <rect x="17" y="11" width="89" height="96" fill="#fafafa" />
        <rect x="17" y="105" width="89" height="5" fill="#c8c8c6" />
        <rect x="17" y="11" width="89" height="27" fill="#ec5a50" />
        <text x="61" y="32" textAnchor="middle" fontFamily="Inter" fontSize="20" fill="#fff">JAN</text>
        <text x="61" y="90" textAnchor="middle" fontFamily="Inter" fontWeight="300" fontSize="56" fill="#222">29</text>
      </g>
    ),
  },
  {
    name: "Notes",
    art: (
      <g transform="rotate(-9 64 63)">
        <rect x="18" y="8" width="92" height="112" fill="#a8923a" />
        <rect x="18" y="8" width="92" height="110" fill="#fcfcfb" />
        <rect x="18" y="8" width="92" height="19" fill="#ffd43b" />
        <path d="M19 30h90" stroke="#999" strokeWidth="1.500" strokeDasharray="2 2" />
        <path d="M19 40h90M19 49h90M19 58h90M19 67h90M19 76h90M19 85h90M19 94h90M19 103h90M19 112h90" stroke="#c9c9c9" strokeWidth="1.500" />
      </g>
    ),
  },
  { name: "System Preferences", art: <Gear /> },
  {
    name: "Chrome",
    running: true,
    art: (
      <Tile>
        <path d={chromePart} fill="#db4437" />
        <path d={chromePart} fill="#ffcd40" transform="rotate(120 64 64)" />
        <path d={chromePart} fill="#0f9d58" transform="rotate(240 64 64)" />
        <circle cx="64" cy="64" r="22" fill="#f1f1f1" />
        <circle cx="64" cy="64" r="17" fill="#4285f4" />
      </Tile>
    ),
  },
  { name: "|short", art: null },
  { name: "Word", running: true, art: <Tile><WordArt /></Tile> },
  {
    name: "PowerPoint",
    running: true,
    art: (
      <Tile>
        <path d="M66 27a37 37 0 0 1 37 37H66z" fill="#ff8f6b" />
        <path d="M66 27v37H29a37 37 0 0 1 37-37z" fill="#ed6c47" />
        <path d="M29 64h74a37 37 0 0 1-74 0z" fill="#d35230" />
        <rect x="22" y="43" width="41" height="41" rx="4" fill="#c43e1c" />
        <text x="42" y="74" textAnchor="middle" fontFamily="Open Sans" fontWeight="600" fontSize="30" fill="#fff">P</text>
      </Tile>
    ),
  },
  {
    name: "Zoom",
    running: true,
    art: (
      <>
        <defs>
          <linearGradient id="zoomus" x2="0" y2="1">
            <stop offset="0" stopColor="#4594fb" />
            <stop offset="1" stopColor="#2670f6" />
          </linearGradient>
        </defs>
        <rect x="4" y="4" width="120" height="120" rx="34" fill="url(#zoomus)" />
        <path d="M27 43h42q11 0 11 11v31H38q-11 0-11-11z" fill="#fff" />
        <path d="M83 58l14-14q3-2 3 1v38q0 3-3 1L83 70z" fill="#fff" />
      </>
    ),
  },
  {
    name: "Acrobat",
    running: true,
    art: (
      <>
        <rect x="8" y="9" width="112" height="110" rx="22" fill="#b30b00" />
        <path
          d="M34 92c-6-7 14-19 32-21 16-2 32 0 31 8-1 8-15 5-24-4C62 63 55 47 56 38c1-8 11-8 10 1-1 14-11 33-21 47-4 6-8 9-11 6z"
          fill="none"
          stroke="#fff"
          strokeWidth="5.500"
          strokeLinejoin="round"
        />
      </>
    ),
  },
  { name: "|tall", art: null },
  {
    name: "Missing item",
    art: (
      <>
        <path d="M33 46c-1-44 62-44 62-2 0 24-28 28-29 50" fill="none" stroke="#b9b0ac" strokeWidth="8" />
        <path d="M61 102h11v14H61z" fill="#b9b0ac" />
      </>
    ),
  },
  {
    name: "Minimized document",
    art: (
      <>
        <rect x="0" y="28" width="128" height="73" fill="#f4f4f4" />
        <rect x="0" y="28" width="128" height="4" fill="#2b579a" />
        <path d="M3 35h60M3 39h12M20 38h40M20 41h34M66 38h46M66 41h40M116 39h10" stroke="#a9b6c9" strokeWidth="2" />
        <rect x="0" y="42" width="128" height="3" fill="#fbeecb" />
        <rect x="5" y="47" width="118" height="8" fill="#fff" />
        <rect x="5" y="58" width="118" height="41" fill="#fff" />
        <path d="M19 64h14M60 71h10" stroke="#aaa" strokeWidth="1.500" />
        <path d="M19 77h92v6H19zM19 83h20v7H19z" fill="#a9cdf8" />
        <path d="M19 79h92M19 85h20" stroke="#5c7694" />
        <rect x="84" y="91" width="40" height="35" rx="9" fill="#fff" />
        <g transform="translate(82 87) scale(.36)">
          <WordArt />
        </g>
      </>
    ),
  },
  {
    name: "Trash",
    art: (
      <>
        <defs>
          <linearGradient id="bin" x2="1" y2="0">
            <stop offset="0" stopColor="#d2d0ce" />
            <stop offset=".35" stopColor="#e9e8e7" />
            <stop offset="1" stopColor="#bfbcba" />
          </linearGradient>
        </defs>
        <path d="M16 16h96l-13 102q-35 16-70 0z" fill="url(#bin)" />
        <ellipse cx="64" cy="17" rx="48" ry="13" fill="#a3a09e" stroke="#eee" strokeWidth="2" />
        <path d="M22 12l16-9 8-7 14 11 10 4 8-14 14 14 12 6-4 10-14 4-20-2-22 2z" fill="#dcdcdc" />
        <path d="M30 6l12-4 10 4-8 8-12 2zM88 4l10 4 4 12-8-4z" fill="#a8a8a8" />
        <path d="M36 15l12 9 4-8z" fill="#5a3234" />
        <path d="M46 9l8-4 8 5-10 5z" fill="#2ac8d8" />
        <path d="M72 4l10 4-4 8-8-3z" fill="#2a4c9e" />
        <path d="M60 14l4 12 6-14z" fill="#c85a2a" />
        <path d="M76 20l12-6-4 12z" fill="#a8412c" />
        <path d="M78-3l8 14-12-2z" fill="#f6f6f6" />
        <path d="M30 32q24 10 50 0-4 18-20 20" fill="#fafafa" opacity=".6" />
        <circle cx="48" cy="84" r="9" fill="#e8b8b0" opacity=".3" />
        <circle cx="84" cy="64" r="8" fill="#d8c0c8" opacity=".3" />
      </>
    ),
  },
];

function Dock() {
  return (
    <nav aria-label="Dock" className="mx-auto flex h-[168px] shrink-0 rounded-t-xl bg-[linear-gradient(90deg,#7c6254,#826455_30%,#7a6054_50%,#6f5a50_62%,#785c50)] px-2 pt-4">
      {apps.map((a) =>
        a.art === null ? (
          <div key={a.name} className="flex h-32 w-16 items-center justify-center">
            <div className={a.name === "|tall" ? "h-[124px] w-[2px] bg-[#432c20]" : "h-[84px] w-[2px] bg-[#432c20]"} />
          </div>
        ) : (
          <button key={a.name} aria-label={a.name} className="flex w-36 flex-col items-center gap-3">
            <svg width="128" height="128" viewBox="0 0 128 128" overflow="visible">
              {a.art}
            </svg>
            {a.running && <span className="h-2 w-2 rounded-full bg-black" />}
          </button>
        ),
      )}
    </nav>
  );
}

function Notification() {
  return (
    <aside className="absolute right-10 top-[84px] z-20 flex h-[126px] w-[688px] rounded-2xl bg-[linear-gradient(#dbe3eb,#e6e8ea_60%,#e9e9e9)] text-[#303236] shadow-[0_4px_24px_rgba(0,0,0,0.4),0_0_2px_rgba(0,0,0,0.5)]">
      <div className="flex flex-1 items-center pb-[3px] pl-[23px]">
        <svg width="58" height="58" viewBox="0 0 58 58">
          <defs>
            <linearGradient id="cloud">
              <stop offset="0" stopColor="#7dd6f5" />
              <stop offset=".5" stopColor="#35a9fb" />
              <stop offset="1" stopColor="#3b82f0" />
            </linearGradient>
          </defs>
          <rect x="1" y="1" width="56" height="56" rx="6" fill="#fff" stroke="#c9cdd1" />
          <path d="M15 43a9 9 0 0 1-2-18 7 7 0 0 1 9-5 12 11 0 0 1 22 7 8 8 0 0 1 1 16z" fill="url(#cloud)" />
        </svg>
        <div className="ml-[21px] text-[22px] leading-[28px]">
          <h3 className="mb-1 text-[24px] font-semibold leading-[30px]">Update Apple ID Settings</h3>
          <p>
            Some account services will not be
            <br />
            available until you sign in again.
          </p>
        </div>
      </div>
      <button className="w-[141px] border-l-2 border-[#cdd0d3] text-[23px] font-medium text-[#6b6d70]">View</button>
    </aside>
  );
}

function BackWindows() {
  return (
    <>
      <div className="absolute bottom-[168px] left-0 top-[46px] w-8 overflow-hidden rounded-bl-xl rounded-tl-xl bg-[#101010]">
        <div className="h-[84px] bg-[#cdd1d5]" />
        <div className="h-[74px] border-b-2 border-[#b5b5b5] bg-[#e0e0e0]" />
        <div className="mt-[544px] h-[104px] w-2 bg-[#5b3a63]" />
      </div>
      <div className="absolute bottom-[168px] right-0 top-[46px] w-[120px] overflow-hidden rounded-r-xl bg-[linear-gradient(90deg,#c4c4c4_45%,#f6f6f6_85%)]">
        <div className="flex h-[84px] items-center justify-end bg-[#dfe3e6] pr-[34px] pt-4">
          <Chevron color="#6a6d70" />
        </div>
        <div className="flex h-[74px] items-center justify-end border-b-2 border-[#c6c6c6] bg-white pr-[16px]">
          <div className="h-[54px] w-[54px] rounded-full border-2 border-[#e07a1f] bg-[#f3e9e0]" />
        </div>
        <div className="h-[100px] border-b-2 border-[#bcbcbc] bg-[linear-gradient(90deg,#e0e0e0_45%,#fff_80%)]" />
        <div className="h-3 bg-[#dddddd]" />
        <div className="ml-[56px] mt-[178px] h-full w-[4px] border-r-2 border-t-2 border-[#a8a8a8]" />
      </div>
    </>
  );
}

export default function App() {
  return (
    <div className="relative flex h-screen w-full flex-col overflow-hidden bg-[#38231a] bg-[repeating-linear-gradient(62deg,rgba(0,0,0,0.16)_0_3px,transparent_3px_8px),linear-gradient(90deg,#3d281d,#2e1b12)] font-['Inter',sans-serif]">
      <BackWindows />
      <MenuBar />
      <section className="relative ml-[14px] mr-[66px] flex min-h-0 flex-1 flex-col overflow-hidden rounded-xl bg-[linear-gradient(#f6f6f6,#efefef_300px)] shadow-[0_10px_40px_rgba(0,0,0,0.6)]">
        <TitleBar />
        <Tabs />
        <Ribbon />
        <UpdateBar />
        <Ruler />
        <Document />
        <StatusBar />
      </section>
      <Dock />
      <Notification />
    </div>
  );
}
